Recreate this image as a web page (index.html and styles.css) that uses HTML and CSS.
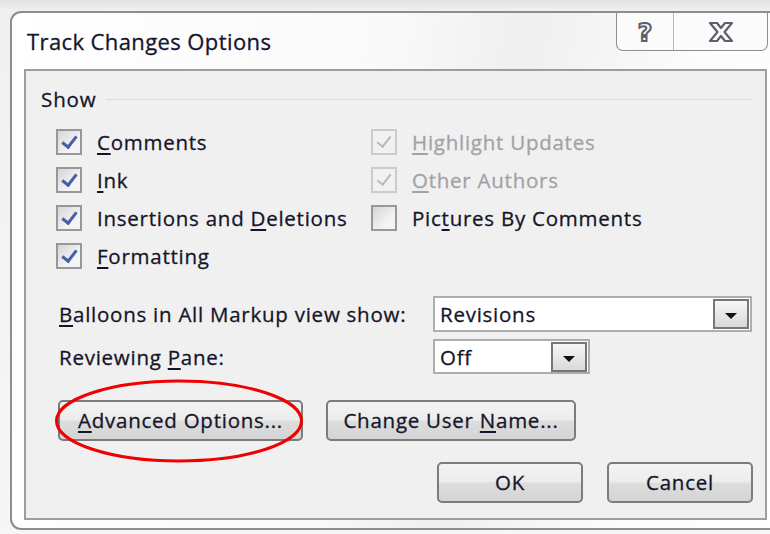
FILE: index.html
```html
<!DOCTYPE html>
<html lang="en">
<head>
<meta charset="utf-8">
<title>Track Changes Options</title>
<link rel="stylesheet" href="styles.css">
</head>
<body>
<div class="window">
  <div class="titlebar">
    <span class="title">Track Changes Options</span>
    <div class="caption">
      <span class="cap-btn help">?</span>
      <span class="cap-btn close">
        <svg width="26" height="22" viewBox="0 0 26 22"><path d="M2 2h7l4 5 4-5h7l-7.5 9 7.5 9h-7l-4-5-4 5h-7l7.5-9z" fill="#fbfbfb" stroke="#5e5e6c" stroke-width="2.2" stroke-linejoin="round"/></svg>
      </span>
    </div>
  </div>

  <div class="panel">
    <div class="group-head"><span>Show</span><i class="rule"></i></div>

    <div class="checks">
      <label class="check"><span class="box on"></span><span><u>C</u>omments</span></label>
      <label class="check dim"><span class="box on"></span><span><u>H</u>ighlight Updates</span></label>
      <label class="check"><span class="box on"></span><span><u>I</u>nk</span></label>
      <label class="check dim"><span class="box on"></span><span><u>O</u>ther Authors</span></label>
      <label class="check"><span class="box on"></span><span>Insertions and <u>D</u>eletions</span></label>
      <label class="check"><span class="box"></span><span>Pic<u>t</u>ures By Comments</span></label>
      <label class="check"><span class="box on"></span><span><u>F</u>ormatting</span></label>
    </div>

    <div class="field first">
      <span class="field-label"><u>B</u>alloons in All Markup view show:</span>
      <div class="combo wide"><span class="combo-text">Revisions</span><span class="drop"><i></i></span></div>
    </div>
    <div class="field second">
      <span class="field-label">Reviewing <u>P</u>ane:</span>
      <div class="combo narrow"><span class="combo-text">Off</span><span class="drop"><i></i></span></div>
    </div>

    <div class="btn-row left">
      <div class="marked">
        <button class="btn adv"><u>A</u>dvanced Options...</button>
        <svg class="ring" width="250" height="84" viewBox="0 0 250 84"><ellipse cx="125" cy="42" rx="122.5" ry="40" fill="none" stroke="#f00000" stroke-width="3"/></svg>
      </div>
      <button class="btn user">Change User <u>N</u>ame...</button>
    </div>

    <div class="btn-row right">
      <button class="btn ok">OK</button>
      <button class="btn cancel">Cancel</button>
    </div>
  </div>
</div>
</body>
</html>
```
FILE: styles.css
```css
html, body {
  margin: 0;
  padding: 0;
}

body {
  width: 770px;
  height: 534px;
  overflow: hidden;
  background: linear-gradient(#e2e2e2 0, #f0f0f0 10px, #f6f6f6 100%);
  font-family: "Open Sans", "Noto Sans", sans-serif;
  color: #15152a;
}

.window {
  margin: 11px 0 0 10px;
  width: 770px;
  height: 515px;
  border: 2px solid #8d8d8d;
  border-right: none;
  border-radius: 11px 0 0 11px;
  background: linear-gradient(100deg, #ffffff 0%, #f9f9f9 45%, #efefef 60%, #fbfbfb 80%, #ffffff 100%);
  box-sizing: content-box;
}

/* title bar */
.titlebar {
  height: 56px;
  display: flex;
  align-items: flex-start;
  justify-content: space-between;
  padding-right: 14px;
}

.title {
  margin: 13px 0 0 15px;
  font-size: 22px;
  letter-spacing: 0.4px;
  color: #15152e;
  -webkit-text-stroke: 0.3px currentColor;
}

.caption {
  display: flex;
  height: 37px;
  border: 1px solid #8e8e8e;
  border-top: none;
  border-radius: 0 0 7px 7px;
  background: #fbfbfb;
}

.cap-btn {
  display: flex;
  align-items: center;
  justify-content: center;
}

.help {
  width: 56px;
  border-right: 1px solid #b9b9b9;
  font: bold 25px "DejaVu Sans", sans-serif;
  color: #fcfcfc;
  -webkit-text-stroke: 2px #5e5e6c;
  padding-top: 1px;
}

.close {
  width: 93px;
}

/* content panel */
.panel {
  margin: 0 0 0 12px;
  width: 724px;
  height: 447px;
  border: 2px solid #9d9d9d;
  background: #f0f0f0;
  padding: 0 0 0 15px;
  box-sizing: content-box;
  font-size: 20.5px;
  letter-spacing: 0.75px;
  -webkit-text-stroke: 0.3px currentColor;
}

.panel u {
  text-decoration-thickness: 1.5px;
  text-underline-offset: 3px;
}

.group-head {
  display: flex;
  align-items: center;
  margin-top: 14px;
  height: 28px;
  letter-spacing: 0.9px;
}

.rule {
  flex: 1;
  height: 1px;
  margin: 0 12px 0 9px;
  background: #d3dde5;
}

/* checkbox grid */
.checks {
  display: grid;
  grid-template-columns: 315px auto;
  grid-auto-rows: 38px;
  margin: 10px 0 0 15px;
}

.check {
  display: flex;
  align-items: center;
  gap: 15px;
}

.box {
  width: 22px;
  height: 22px;
  border: 2px solid #989898;
  background: linear-gradient(135deg, #d6d6d6, #f4f4f4 70%);
  position: relative;
  flex: none;
}

.box.on::after {
  content: "";
  position: absolute;
  left: 7px;
  top: 2px;
  width: 6px;
  height: 12px;
  border: solid #4560a8;
  border-width: 0 3px 3px 0;
  transform: rotate(38deg);
}

.check.dim {
  color: #a2a2a8;
}

.check.dim .box {
  border-color: #cbcbcb;
  background: #f1f1f1;
}

.check.dim .box.on::after {
  border-color: #b9b9bd;
  border-width: 0 2.5px 2.5px 0;
}

/* combo fields */
.field {
  display: flex;
  align-items: center;
  margin-left: 18px;
}

.field.first {
  margin-top: 21px;
  height: 36px;
}

.field.second {
  margin-top: 7px;
  height: 35px;
}

.field-label {
  width: 374px;
}

.combo {
  display: flex;
  align-items: center;
  justify-content: space-between;
  box-sizing: border-box;
  height: 100%;
  border: 2px solid #adadad;
  background: #ffffff;
  padding: 0 1px 0 5px;
}

.combo.wide {
  width: 319px;
}

.combo.narrow {
  width: 157px;
}

.drop {
  width: 36px;
  height: 30px;
  box-sizing: border-box;
  border: 2px solid #767676;
  background: linear-gradient(#f6f6f6, #d9d9d9);
  display: flex;
  align-items: center;
  justify-content: center;
}

.drop i {
  width: 0;
  height: 0;
  border-left: 6.5px solid transparent;
  border-right: 6.5px solid transparent;
  border-top: 6px solid #111;
  margin-top: 4px;
}

/* push buttons */
.btn-row {
  display: flex;
  gap: 23px;
}

.btn-row.left {
  margin: 26px 0 0 17px;
}

.btn-row.right {
  justify-content: flex-end;
  gap: 24px;
  margin: 21px 12px 0 0;
}

.btn {
  height: 41px;
  border: 2px solid #7c7c7c;
  border-radius: 5px;
  background: linear-gradient(#f3f3f3 0%, #ececec 48%, #dddddd 52%, #d4d4d4 100%);
  font: inherit;
  letter-spacing: inherit;
  color: #15152a;
  -webkit-text-stroke: inherit;
  padding: 0 0 2px;
}

.adv {
  width: 245px;
}

.user {
  width: 250px;
}

.ok,
.cancel {
  width: 146px;
}

.marked {
  position: relative;
}

.ring {
  position: absolute;
  left: -4px;
  top: -21px;
  pointer-events: none;
}
```
